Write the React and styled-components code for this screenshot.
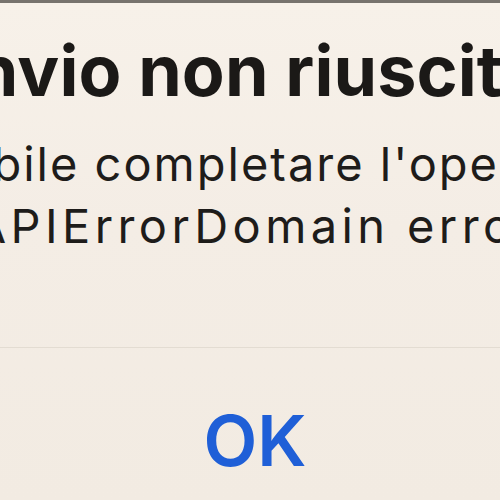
import React from "react";
import styled, { createGlobalStyle } from "styled-components";

const GlobalStyle = createGlobalStyle`
  html, body {
    margin: 0;
    padding: 0;
    background: #f4eee6;
    overflow: hidden;
  }
  * { box-sizing: border-box; }
`;

const Alert = styled.div`
  width: 500px;
  height: 500px;
  overflow: hidden;
  display: flex;
  flex-direction: column;
  border-top: 3px solid #77736d;
  background: linear-gradient(180deg, #f7f1e9 0%, #f4ede5 45%, #f2ebe2 100%);
  font-family: Inter, "Noto Sans", "Liberation Sans", sans-serif;
`;

const Body = styled.div`
  margin: 0 -300px;
  padding-top: 29px;
  text-align: center;
  white-space: nowrap;
`;

const Title = styled.h2`
  margin: 0;
  font-size: 70px;
  line-height: 77px;
  font-weight: 700;
  color: #1b1917;
  letter-spacing: 0.1px;
`;

const Message = styled.p`
  margin: 24px 0 0;
  font-size: 47px;
  line-height: 62px;
  font-weight: 400;
  color: #1e1c1a;
`;

const Line = styled.span`
  display: block;
  letter-spacing: ${(p) => p.$tracking || "2px"};
`;

const Divider = styled.hr`
  margin: 90px 0 0;
  border: 0;
  height: 1px;
  background: #e3dcd2;
`;

const ActionButton = styled.button`
  flex: 1;
  width: 100%;
  padding: 58px 0 0 10px;
  margin: 0;
  border: 0;
  background: transparent;
  font-family: inherit;
  font-size: 70px;
  line-height: 70px;
  font-weight: 600;
  color: #1f5fd7;
  display: flex;
  justify-content: center;
  align-items: flex-start;
`;

export default function App() {
  return (
    <>
      <GlobalStyle />
      <Alert>
        <Body>
          <Title>Invio non riuscito</Title>
          <Message>
            <Line>Impossibile completare l'operazione.</Line>
            <Line $tracking="4.4px">(SKAPIErrorDomain error 1.)</Line>
          </Message>
        </Body>
        <Divider />
        <ActionButton>OK</ActionButton>
      </Alert>
    </>
  );
}
